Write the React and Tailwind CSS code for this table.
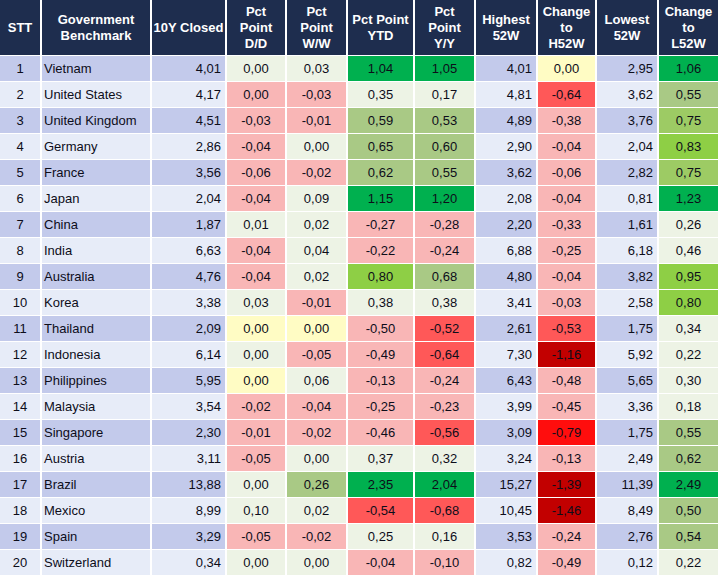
import React from 'react';

const C = {
  odd: 'bg-[#c3caeb]',
  even: 'bg-[#e7ecf8]',
  n: 'bg-[#edf3e5]',
  lr: 'bg-[#f9b6b6]',
  r: 'bg-[#ff5858]',
  br: 'bg-[#ff0d0d]',
  dr: 'bg-[#c20000]',
  y: 'bg-[#fffcc4]',
  ol: 'bg-[#a9c985]',
  md: 'bg-[#9dcb64]',
  yg: 'bg-[#8ecf45]',
  g: 'bg-[#00b04f]',
};

// name, 10Y, [d/d, c], [w/w, c], [ytd, c], [y/y, c], high, [h52w, c], low, [l52w, c]
const rows = [
  ['Vietnam', '4,01', ['0,00', 'n'], ['0,03', 'n'], ['1,04', 'g'], ['1,05', 'g'], '4,01', ['0,00', 'y'], '2,95', ['1,06', 'g']],
  ['United States', '4,17', ['0,00', 'lr'], ['-0,03', 'lr'], ['0,35', 'n'], ['0,17', 'n'], '4,81', ['-0,64', 'r'], '3,62', ['0,55', 'ol']],
  ['United Kingdom', '4,51', ['-0,03', 'lr'], ['-0,01', 'lr'], ['0,59', 'ol'], ['0,53', 'ol'], '4,89', ['-0,38', 'lr'], '3,76', ['0,75', 'md']],
  ['Germany', '2,86', ['-0,04', 'lr'], ['0,00', 'n'], ['0,65', 'ol'], ['0,60', 'ol'], '2,90', ['-0,04', 'lr'], '2,04', ['0,83', 'yg']],
  ['France', '3,56', ['-0,06', 'lr'], ['-0,02', 'lr'], ['0,62', 'ol'], ['0,55', 'ol'], '3,62', ['-0,06', 'lr'], '2,82', ['0,75', 'md']],
  ['Japan', '2,04', ['-0,04', 'lr'], ['0,09', 'n'], ['1,15', 'g'], ['1,20', 'g'], '2,08', ['-0,04', 'lr'], '0,81', ['1,23', 'g']],
  ['China', '1,87', ['0,01', 'n'], ['0,02', 'n'], ['-0,27', 'lr'], ['-0,28', 'lr'], '2,20', ['-0,33', 'lr'], '1,61', ['0,26', 'n']],
  ['India', '6,63', ['-0,04', 'lr'], ['0,04', 'n'], ['-0,22', 'lr'], ['-0,24', 'lr'], '6,88', ['-0,25', 'lr'], '6,18', ['0,46', 'n']],
  ['Australia', '4,76', ['-0,04', 'lr'], ['0,02', 'n'], ['0,80', 'yg'], ['0,68', 'ol'], '4,80', ['-0,04', 'lr'], '3,82', ['0,95', 'yg']],
  ['Korea', '3,38', ['0,03', 'n'], ['-0,01', 'lr'], ['0,38', 'n'], ['0,38', 'n'], '3,41', ['-0,03', 'lr'], '2,58', ['0,80', 'yg']],
  ['Thailand', '2,09', ['0,00', 'y'], ['0,00', 'y'], ['-0,50', 'lr'], ['-0,52', 'r'], '2,61', ['-0,53', 'r'], '1,75', ['0,34', 'n']],
  ['Indonesia', '6,14', ['0,00', 'n'], ['-0,05', 'lr'], ['-0,49', 'lr'], ['-0,64', 'r'], '7,30', ['-1,16', 'dr'], '5,92', ['0,22', 'n']],
  ['Philippines', '5,95', ['0,00', 'y'], ['0,06', 'n'], ['-0,13', 'lr'], ['-0,24', 'lr'], '6,43', ['-0,48', 'lr'], '5,65', ['0,30', 'n']],
  ['Malaysia', '3,54', ['-0,02', 'lr'], ['-0,04', 'lr'], ['-0,25', 'lr'], ['-0,23', 'lr'], '3,99', ['-0,45', 'lr'], '3,36', ['0,18', 'n']],
  ['Singapore', '2,30', ['-0,01', 'lr'], ['-0,02', 'lr'], ['-0,46', 'lr'], ['-0,56', 'r'], '3,09', ['-0,79', 'br'], '1,75', ['0,55', 'ol']],
  ['Austria', '3,11', ['-0,05', 'lr'], ['0,00', 'n'], ['0,37', 'n'], ['0,32', 'n'], '3,24', ['-0,13', 'lr'], '2,49', ['0,62', 'ol']],
  ['Brazil', '13,88', ['0,00', 'n'], ['0,26', 'ol'], ['2,35', 'g'], ['2,04', 'g'], '15,27', ['-1,39', 'dr'], '11,39', ['2,49', 'g']],
  ['Mexico', '8,99', ['0,10', 'n'], ['0,02', 'n'], ['-0,54', 'r'], ['-0,68', 'r'], '10,45', ['-1,46', 'dr'], '8,49', ['0,50', 'ol']],
  ['Spain', '3,29', ['-0,05', 'lr'], ['-0,02', 'lr'], ['0,25', 'n'], ['0,16', 'n'], '3,53', ['-0,24', 'lr'], '2,76', ['0,54', 'ol']],
  ['Switzerland', '0,34', ['0,00', 'n'], ['0,00', 'n'], ['-0,04', 'lr'], ['-0,10', 'lr'], '0,82', ['-0,49', 'lr'], '0,12', ['0,22', 'n']],
];

const headers = [
  ['STT'],
  ['Government', 'Benchmark'],
  ['10Y Closed'],
  ['Pct', 'Point', 'D/D'],
  ['Pct', 'Point', 'W/W'],
  ['Pct Point', 'YTD'],
  ['Pct', 'Point', 'Y/Y'],
  ['Highest', '52W'],
  ['Change', 'to', 'H52W'],
  ['Lowest', '52W'],
  ['Change', 'to', 'L52W'],
];

const Cell = ({ bg, align = 'center', children }) => {
  const al =
    align === 'left' ? 'justify-start pl-[2px]' : align === 'right' ? 'justify-end pr-[4px]' : 'justify-center';
  return <div className={`flex items-center h-[25px] ${bg} ${al}`}>{children}</div>;
};

export default function App() {
  return (
    <div className="w-[720px] h-[576px] bg-white overflow-hidden font-['Liberation_Sans',Arial,sans-serif]">
      <div className="grid grid-cols-[40px_108px_73px_58px_59px_65px_59px_60px_57px_60px_59px] gap-x-[2px] gap-y-px pb-px text-[13px] text-[#0d0d1a]">
        {headers.map((h, i) => (
          <div
            key={i}
            className="h-[55px] bg-[#1e2d4e] text-white font-bold leading-[16px] flex flex-col items-center justify-center text-center whitespace-nowrap"
          >
            {h.map((l, j) => (
              <span key={j}>{l}</span>
            ))}
          </div>
        ))}
        {rows.map((r, i) => {
          const base = i % 2 === 0 ? C.odd : C.even;
          const [name, y10, dd, ww, ytd, yy, hi, h52, lo, l52] = r;
          return (
            <React.Fragment key={i}>
              <Cell bg={base}>{i + 1}</Cell>
              <Cell bg={base} align="left">{name}</Cell>
              <Cell bg={base} align="right">{y10}</Cell>
              <Cell bg={C[dd[1]]}>{dd[0]}</Cell>
              <Cell bg={C[ww[1]]}>{ww[0]}</Cell>
              <Cell bg={C[ytd[1]]}>{ytd[0]}</Cell>
              <Cell bg={C[yy[1]]}>{yy[0]}</Cell>
              <Cell bg={base} align="right">{hi}</Cell>
              <Cell bg={C[h52[1]]}>{h52[0]}</Cell>
              <Cell bg={base} align="right">{lo}</Cell>
              <Cell bg={C[l52[1]]}>{l52[0]}</Cell>
            </React.Fragment>
          );
        })}
      </div>
    </div>
  );
}
